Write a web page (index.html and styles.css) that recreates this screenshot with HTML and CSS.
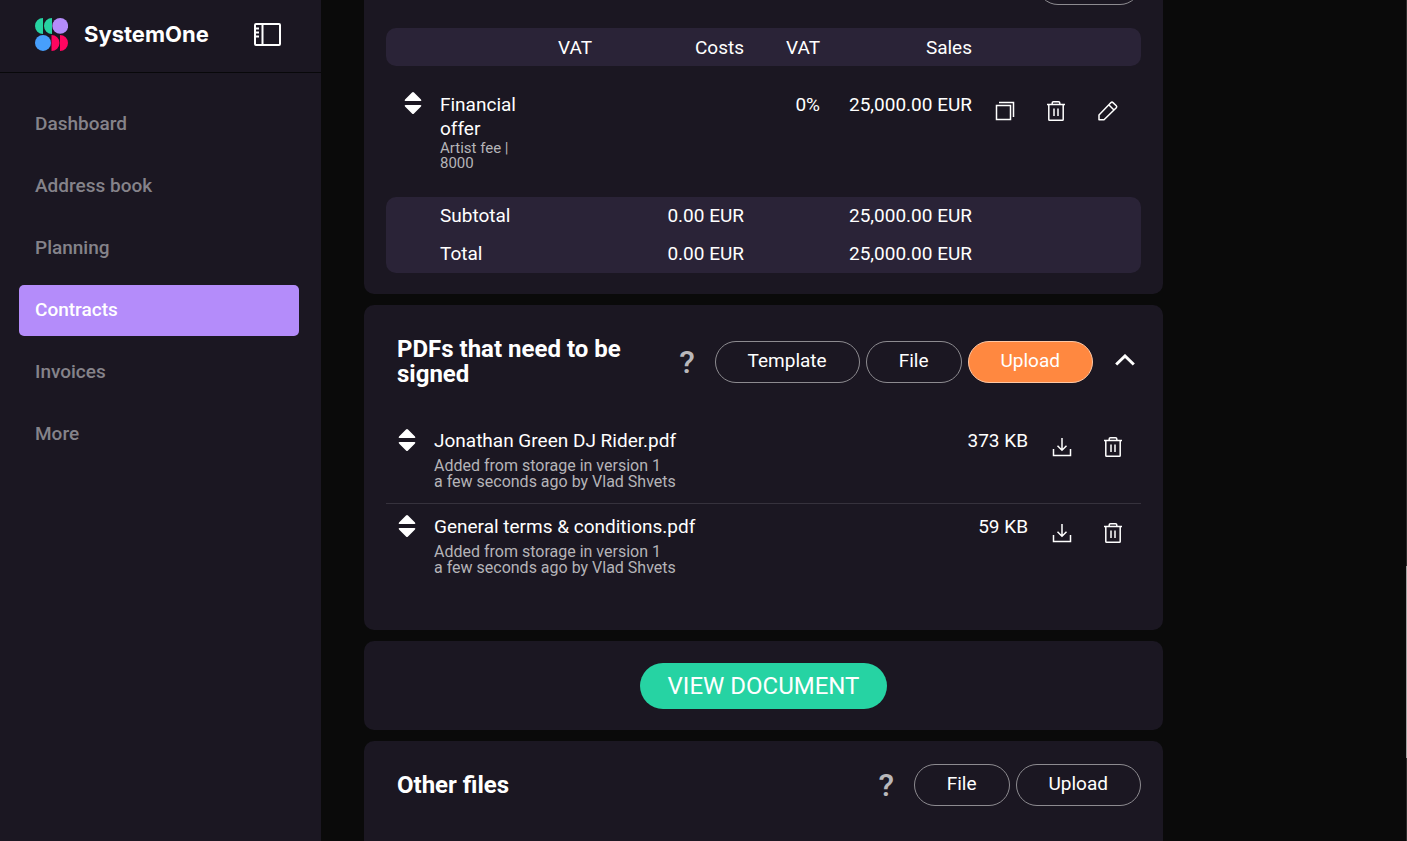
FILE: index.html
```html
<!DOCTYPE html>
<html lang="en">
<head>
<meta charset="utf-8">
<meta name="viewport" content="width=device-width, initial-scale=1">
<title>SystemOne – Contracts</title>
<link rel="stylesheet" href="styles.css">
</head>
<body>
<svg class="sprite" aria-hidden="true">
  <symbol id="i-sort" viewBox="0 0 18 22"><path fill="currentColor" d="M9 0Q9.500 0 10 .5L17 7.500Q18 9 16.500 9H1.500Q0 9 1 7.500L8 .5Q8.500 0 9 0ZM9 22Q9.500 22 10 21.500L17 14.500Q18 13 16.500 13H1.500Q0 13 1 14.500L8 21.500Q8.500 22 9 22Z"/></symbol>
  <symbol id="i-trash" viewBox="0 0 24 24"><path fill="none" stroke="currentColor" stroke-width="1.500" d="M3 5.500H21M4.800 5.500V20.500Q4.800 21.300 5.600 21.300H18.400Q19.200 21.300 19.200 20.500V5.500M8.200 5.500V4Q8.200 2.700 9.500 2.700H14.500Q15.800 2.700 15.800 4V5.500M10 9.500V17M14 9.500V17"/></symbol>
  <symbol id="i-copy" viewBox="0 0 24 24"><path fill="none" stroke="currentColor" stroke-width="1.500" d="M3.500 6.500H17.500V20.500H3.500ZM6 3.500H20.500V18"/></symbol>
  <symbol id="i-edit" viewBox="0 0 24 24"><path fill="none" stroke="currentColor" stroke-width="1.500" stroke-linejoin="round" d="M4 20.700V16L16 3.600Q17 2.700 18 3.600L21.300 6.700Q22.200 7.700 21.300 8.700L9 20.700ZM14 6L19 11"/></symbol>
  <symbol id="i-download" viewBox="0 0 24 24"><path fill="none" stroke="currentColor" stroke-width="1.500" d="M12 3V15M7.500 10.800L12 15.200L16.500 10.800M3.500 14V20.500H20.500V14"/></symbol>
</svg>

<div class="app">
  <aside class="sidebar">
    <div class="brand">
      <svg class="brand-mark" viewBox="0 0 33 33" role="img" aria-label="SystemOne logo">
        <path fill="#27d3a2" d="M8 0A8 8 0 0 0 8 16ZM17 0A8 8 0 0 0 17 16Z"/>
        <circle cx="25.200" cy="7.900" r="7.900" fill="#b48cfa"/>
        <circle cx="8" cy="24.900" r="8" fill="#479ffc"/>
        <path fill="#ff0560" d="M16.500 17A8 8 0 0 1 16.500 33ZM25 17A8 8 0 0 1 25 33Z"/>
      </svg>
      <span class="brand-name">SystemOne</span>
      <button class="icon-btn panel-toggle" type="button" aria-label="Toggle sidebar">
        <svg viewBox="0 0 27 23"><path fill="none" stroke="currentColor" stroke-width="2" d="M2 1H25Q26 1 26 2V21Q26 22 25 22H2Q1 22 1 21V2Q1 1 2 1ZM8.500 1V22M1 5.500H5M1 9.500H5M1 13.500H5"/></svg>
      </button>
    </div>
    <nav class="nav">
      <a href="#">Dashboard</a>
      <a href="#">Address book</a>
      <a href="#">Planning</a>
      <a href="#" class="active" aria-current="page">Contracts</a>
      <a href="#">Invoices</a>
      <a href="#">More</a>
    </nav>
  </aside>

  <main class="main">
    <div class="content">
      <section class="card card-finance">
        <div class="finance-head"><button class="pill pill-add" type="button" aria-label="Add line"></button></div>
        <table class="finance">
          <colgroup><col class="c-handle"><col class="c-vat"><col class="c-vat"><col class="c-sum"><col class="c-vat"><col class="c-sum"><col></colgroup>
          <thead>
            <tr><th></th><th></th><th>VAT</th><th>Costs</th><th>VAT</th><th>Sales</th><th></th></tr>
          </thead>
          <tbody>
            <tr>
              <td class="handle"><svg class="sort"><use href="#i-sort"/></svg></td>
              <td class="name">Financial offer<small>Artist fee | 8000</small></td>
              <td></td><td></td><td>0%</td><td>25,000.00 EUR</td>
              <td class="actions-cell"><div class="actions">
                <button class="icon-btn" type="button" aria-label="Duplicate"><svg><use href="#i-copy"/></svg></button>
                <button class="icon-btn" type="button" aria-label="Delete"><svg><use href="#i-trash"/></svg></button>
                <button class="icon-btn" type="button" aria-label="Edit"><svg><use href="#i-edit"/></svg></button>
              </div></td>
            </tr>
          </tbody>
          <tfoot>
            <tr><td></td><td class="name">Subtotal</td><td></td><td>0.00 EUR</td><td></td><td>25,000.00 EUR</td><td></td></tr>
            <tr><td></td><td class="name">Total</td><td></td><td>0.00 EUR</td><td></td><td>25,000.00 EUR</td><td></td></tr>
          </tfoot>
        </table>
      </section>

      <section class="card card-pdfs">
        <header class="card-head">
          <h2>PDFs that need to be signed</h2>
          <button class="help" type="button" aria-label="Help">?</button>
          <div class="pills">
            <button class="pill" type="button">Template</button>
            <button class="pill" type="button">File</button>
            <button class="pill primary" type="button">Upload</button>
          </div>
          <button class="icon-btn collapse" type="button" aria-label="Collapse"><svg viewBox="0 0 20 12"><path fill="none" stroke="currentColor" stroke-width="3" d="M1.200 10.500L10 2L18.800 10.500"/></svg></button>
        </header>
        <ul class="files">
          <li>
            <svg class="sort"><use href="#i-sort"/></svg>
            <div class="file">Jonathan Green DJ Rider.pdf<small>Added from storage in version 1<br>a few seconds ago by Vlad Shvets</small></div>
            <span class="size">373 KB</span>
            <div class="actions">
              <button class="icon-btn" type="button" aria-label="Download"><svg><use href="#i-download"/></svg></button>
              <button class="icon-btn" type="button" aria-label="Delete"><svg><use href="#i-trash"/></svg></button>
            </div>
          </li>
          <li>
            <svg class="sort"><use href="#i-sort"/></svg>
            <div class="file">General terms &amp; conditions.pdf<small>Added from storage in version 1<br>a few seconds ago by Vlad Shvets</small></div>
            <span class="size">59 KB</span>
            <div class="actions">
              <button class="icon-btn" type="button" aria-label="Download"><svg><use href="#i-download"/></svg></button>
              <button class="icon-btn" type="button" aria-label="Delete"><svg><use href="#i-trash"/></svg></button>
            </div>
          </li>
        </ul>
      </section>

      <section class="card card-view">
        <button class="view-btn" type="button">VIEW DOCUMENT</button>
      </section>

      <section class="card card-other">
        <header class="card-head">
          <h2>Other files</h2>
          <button class="help" type="button" aria-label="Help">?</button>
          <div class="pills">
            <button class="pill" type="button">File</button>
            <button class="pill" type="button">Upload</button>
          </div>
        </header>
      </section>
    </div>
    <div class="scroll-track"><div class="scroll-thumb"></div></div>
  </main>
</div>
</body>
</html>
```
FILE: styles.css
```css
* { box-sizing: border-box; }

body {
  margin: 0;
  background: #0a0a0a;
  color: #fff;
  font: 19px/24px Roboto, "Liberation Sans", sans-serif;
}

button {
  margin: 0;
  padding: 0;
  border: 0;
  background: none;
  color: inherit;
  font: inherit;
  cursor: pointer;
}

svg { display: block; }
.sprite { display: none; }

.app {
  display: grid;
  grid-template-columns: 321px 1fr;
  height: 100vh;
  overflow: hidden;
}

/* Sidebar */
.sidebar { background: #1b1722; }

.brand {
  display: flex;
  align-items: center;
  height: 73px;
  padding: 0 40px 4px 35px;
  border-bottom: 1px solid #08080a;
}

.brand-mark { width: 33px; height: 33px; }

.brand-name {
  flex: 1;
  margin-left: 16px;
  font: 700 22px/32px Inter, sans-serif;
}

.panel-toggle svg { width: 27px; height: 23px; }

.nav {
  display: flex;
  flex-direction: column;
  gap: 11px;
  padding: 26px 22px 0 19px;
}

.nav a {
  padding: 13px 16px 14px;
  border-radius: 5px;
  color: #85838a;
  font-weight: 500;
  text-decoration: none;
}

.nav a.active { background: #b48cfa; color: #fff; }

/* Main column */
.main {
  display: flex;
  justify-content: space-between;
  height: 100vh;
  overflow: hidden;
}

.content {
  flex: 0 1 799px;
  display: flex;
  flex-direction: column;
  gap: 11px;
  margin: -60px 0 0 43px;
}

.card {
  flex: none;
  padding: 0 22px;
  border-radius: 10px;
  background: #1b1722;
}

.scroll-track {
  width: 1px;
  padding-top: 566px;
  background: #2c2c2c;
}

.scroll-thumb { height: 192px; background: #9f9f9f; }

/* Buttons */
.pill {
  height: 42px;
  padding: 0 32px 3px;
  border: 1px solid #8d8b90;
  border-radius: 21px;
}

.pill.primary { background: #ff8840; border-color: #ffc7a4; }

.pill-add { width: 104px; }

.pills { display: flex; gap: 6px; }

.icon-btn { display: grid; place-items: center; }

.actions { display: flex; }
.actions .icon-btn { width: 51px; height: 24px; }
.actions svg { width: 24px; height: 24px; }

.sort { width: 18px; height: 22px; }

/* Finance table */
.card-finance { padding-bottom: 21px; }

.finance-head {
  display: flex;
  justify-content: flex-end;
  padding: 23px 0;
}

.finance {
  width: 100%;
  border-collapse: separate;
  border-spacing: 0;
  table-layout: fixed;
}

.c-handle { width: 54px; }
.c-vat { width: 76px; }
.c-sum { width: 152px; }

.finance th, .finance td {
  padding: 7px 0;
  font-weight: 400;
  text-align: right;
  vertical-align: top;
  white-space: nowrap;
}

.finance th { padding: 8px 0 6px; }

.finance .name { text-align: left; }

.finance thead th, .finance tfoot td { background: #2a2337; }
.finance thead th:first-child { border-radius: 10px 0 0 10px; }
.finance thead th:last-child { border-radius: 0 10px 10px 0; }
.finance tfoot tr:first-child td:first-child { border-top-left-radius: 10px; }
.finance tfoot tr:first-child td:last-child { border-top-right-radius: 10px; }
.finance tfoot tr:last-child td:first-child { border-bottom-left-radius: 10px; }
.finance tfoot tr:last-child td:last-child { border-bottom-right-radius: 10px; }

.finance tbody td { padding: 27px 0 26px; white-space: normal; }
.finance tbody td.handle { padding: 26px 0 0 18px; }
.finance tbody td.actions-cell { padding: 33px 0 0 7px; }

.name small {
  display: block;
  color: #b5b4b8;
  font-size: 15px;
  line-height: 15px;
}

/* Card headings */
.card-head { display: flex; align-items: center; }

.card-head h2 {
  flex: 1;
  margin: 0;
  padding-left: 11px;
  font-size: 24px;
  line-height: 25px;
  font-weight: 700;
}

.help {
  width: 17px;
  margin: 0 19px 0 0;
  color: #b9b8bb;
  font-size: 32px;
  line-height: 32px;
  font-weight: 500;
}

.collapse { width: 20px; margin: 0 6px 0 22px; padding-bottom: 5px; }
.collapse svg { width: 20px; height: 12px; }

.card-pdfs { padding-top: 32px; padding-bottom: 41px; }
.card-pdfs .card-head { padding-bottom: 31px; }

/* File list */
.files { margin: 0; padding: 0; list-style: none; }

.files li {
  display: flex;
  align-items: flex-start;
  padding: 11px 0 13px 12px;
}

.files li + li { border-top: 1px solid #36323d; }

.file { flex: 1; margin-left: 18px; }

.file small {
  display: block;
  margin-top: 5px;
  color: #b5b4b8;
  font-size: 16px;
  line-height: 16px;
}

.files .actions { padding: 6px 3px 0 8px; }

/* View document */
.card-view {
  display: flex;
  justify-content: center;
  padding-top: 22px;
  padding-bottom: 21px;
}

.view-btn {
  height: 46px;
  padding: 0 28px;
  border-radius: 23px;
  background: #26d3a3;
  font-size: 24px;
}

.card-other { padding-top: 23px; padding-bottom: 60px; }
```
